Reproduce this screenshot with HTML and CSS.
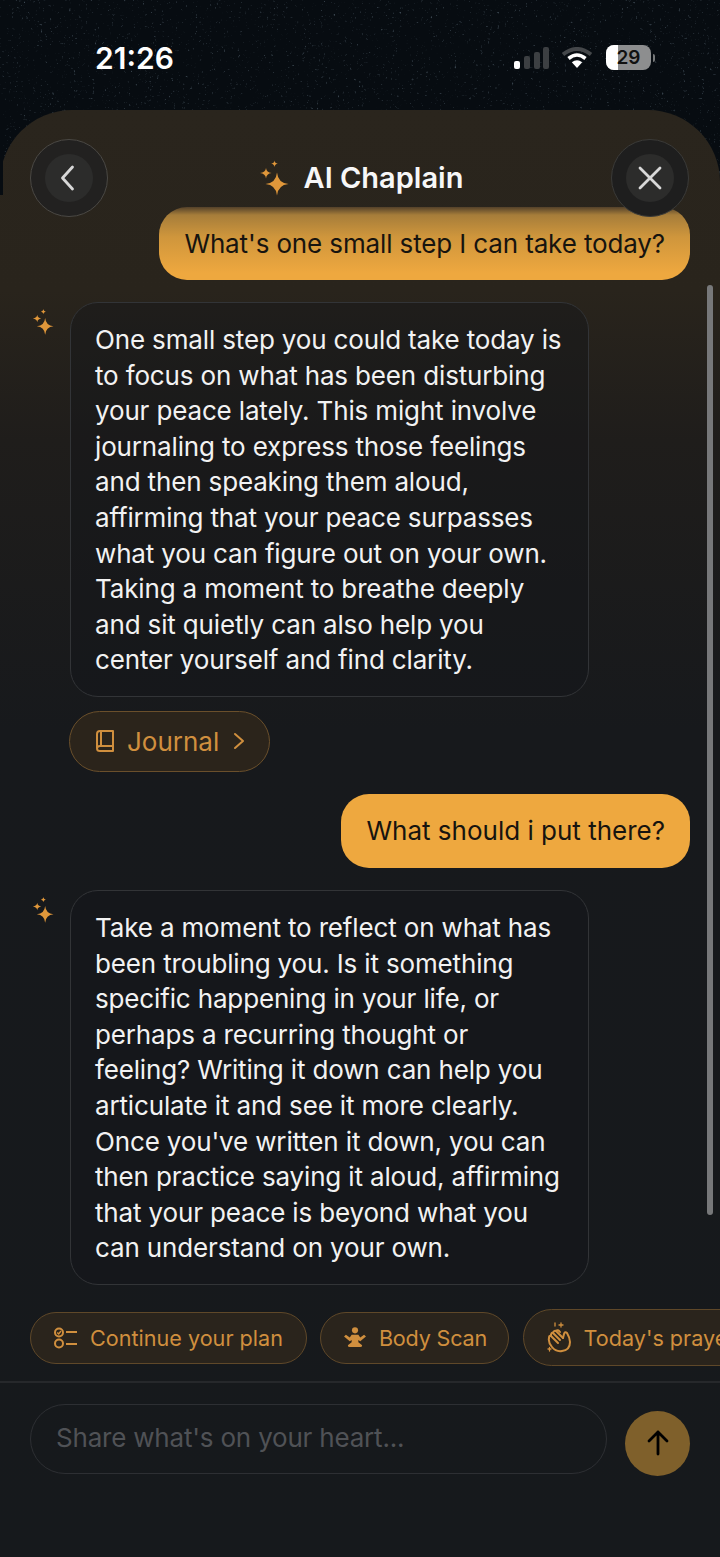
FILE: index.html
```html
<!DOCTYPE html>
<html lang="en">

<head>
    <meta charset="UTF-8">
    <title>AI Chaplain</title>
    <link rel="stylesheet" href="styles.css">
</head>

<body>
    <svg class="defs" width="0" height="0">
        <symbol id="sparkles" viewBox="0 0 30 36">
            <path d="M18 12.500 Q19 23 29.500 24 Q19 25 18 35.500 Q17 25 6.500 24 Q17 23 18 12.500Z" />
            <path d="M7 8 Q7.500 12.500 12.500 13 Q7.500 13.500 7 18.500 Q6.500 13.500 1 13 Q6.500 12.500 7 8Z" />
            <path d="M15.500 0.500 Q15.800 3.300 18.800 3.700 Q15.800 4 15.500 7 Q15.200 4 12.200 3.700 Q15.200 3.300 15.500 0.500Z" />
        </symbol>
        <filter id="star-noise" x="0" y="0" width="100%" height="100%">
            <feTurbulence type="fractalNoise" baseFrequency="0.42" numOctaves="2" seed="7" />
            <feColorMatrix type="matrix" values="0 0 0 0 0.4  0 0 0 0 0.55  0 0 0 0 0.68  2.6 2.6 0 0 -3.2" />
        </filter>
    </svg>

    <svg class="stars" width="720" height="200">
        <rect width="720" height="200" filter="url(#star-noise)" />
    </svg>

    <div class="status-bar">
        <span class="time">21:26</span>
        <div class="status-icons">
            <svg class="signal" width="35" height="22" viewBox="0 0 35 22">
                <rect x="0" y="14" width="6" height="8" rx="2" fill="#fff" />
                <rect x="10" y="9" width="6" height="13" rx="2" fill="#3c3f42" />
                <rect x="20" y="5" width="6" height="17" rx="2" fill="#3c3f42" />
                <rect x="29" y="0" width="6" height="22" rx="2" fill="#3c3f42" />
            </svg>
            <svg class="wifi" width="30" height="22" viewBox="0 0 30 22">
                <path d="M1 7.500 Q15 -3.500 29 7.500" fill="none" stroke="#44474a" stroke-width="4" />
                <path d="M6.500 11.500 Q15 4.500 23.500 11.500" fill="none" stroke="#fff" stroke-width="3.600" />
                <path d="M15 21 L9.800 15.300 Q15 11.300 20.200 15.300Z" fill="#fff" />
            </svg>
            <div class="battery">
                <span class="battery-level"></span>
                <span class="battery-num">29</span>
            </div>
            <span class="battery-nub"></span>
        </div>
    </div>

    <div class="sheet">
        <div class="sheet-header">
            <button class="round-btn">
                <span class="round-inner">
                    <svg width="20" height="28" viewBox="0 0 20 28" fill="none" stroke="#d8d8d8" stroke-width="2.800" stroke-linecap="round" stroke-linejoin="round">
                        <path d="M13.500 3 L3.500 14 L13.500 25" />
                    </svg>
                </span>
            </button>
            <div class="title">
                <svg class="icon-amber" width="30" height="36"><use href="#sparkles" /></svg>
                <span>AI Chaplain</span>
            </div>
            <button class="round-btn round-btn-close">
                <span class="round-inner">
                    <svg width="28" height="28" viewBox="0 0 28 28" fill="none" stroke="#d8d8d8" stroke-width="2.800" stroke-linecap="round">
                        <path d="M4 4 L24 24 M24 4 L4 24" />
                    </svg>
                </span>
            </button>
        </div>

        <div class="chat">
            <div class="msg-user msg-user-first">What's one small step I can take today?</div>

            <div class="msg-ai">
                <svg class="icon-amber msg-spark" width="22" height="26"><use href="#sparkles" /></svg>
                <div class="msg-ai-text">One small step you could take today is to focus on what has been disturbing your peace lately. This might involve journaling to express those feelings and then speaking them aloud, affirming that your peace surpasses what you can figure out on your own. Taking a moment to breathe deeply and sit quietly can also help you center yourself and find clarity.</div>
            </div>

            <button class="journal-btn">
                <svg width="22" height="24" viewBox="0 0 22 24" fill="none" stroke="#d08f3e" stroke-width="2" stroke-linejoin="round">
                    <path d="M3 19 V5 Q3 2 6 2 H19 V22 H6 Q3 22 3 19.500 Q3 17 6 17 H19" />
                    <path d="M7 2 V17" />
                </svg>
                <span>Journal</span>
                <svg width="14" height="20" viewBox="0 0 14 20" fill="none" stroke="#d08f3e" stroke-width="2" stroke-linecap="round" stroke-linejoin="round">
                    <path d="M3 3 L11 10 L3 17" />
                </svg>
            </button>

            <div class="msg-user">What should i put there?</div>

            <div class="msg-ai">
                <svg class="icon-amber msg-spark" width="22" height="26"><use href="#sparkles" /></svg>
                <div class="msg-ai-text">Take a moment to reflect on what has been troubling you. Is it something specific happening in your life, or perhaps a recurring thought or feeling? Writing it down can help you articulate it and see it more clearly. Once you've written it down, you can then practice saying it aloud, affirming that your peace is beyond what you can understand on your own.</div>
            </div>
        </div>

        <div class="chips">
            <button class="chip">
                <svg width="23" height="22" viewBox="0 0 23 22" fill="none" stroke="#d08f3e" stroke-width="2">
                    <circle cx="5" cy="5.500" r="4" />
                    <path d="M3.200 5.500 L4.700 7 L7 4" stroke-width="1.400" />
                    <circle cx="5" cy="16.500" r="4" />
                    <path d="M12 5 H23 M12 17 H23" />
                </svg>
                <span>Continue your plan</span>
            </button>
            <button class="chip chip-tight">
                <svg width="22" height="21" viewBox="0 0 23 22" fill="#d08f3e">
                    <circle cx="11.500" cy="3.500" r="3.200" />
                    <path d="M8 8 H15 L17 11 L21 8 L23 10 L17 15 L15 13.500 V16 L19 19 Q19 21 17 21 H6 Q4 21 4 19 L8 16 V13.500 L6 15 L0 10 L2 8 L6 11Z" />
                </svg>
                <span>Body Scan</span>
            </button>
            <button class="chip chip-tall">
                <svg width="24" height="32" viewBox="0 0 24 32" fill="none" stroke="#d08f3e" stroke-width="2" stroke-linecap="round" stroke-linejoin="round">
                    <path d="M4 14 L11 21 M6 11 L13 18 M9 9 L16 16" />
                    <path d="M2 16 Q1 20 5 25 Q9 30 15 29 Q23 28 23 20 Q23 16 20 11 Q18 9 17 12 L16 16" />
                    <path d="M4 14 Q2 13 2 16 M6 11 Q4 10 4 14 M9 9 Q7 8 6 11 M9 9 Q11 7 13 10" />
                    <path d="M8 1 V4 M14 1 V5 M12 3 H16 M1 27 H4 M2.500 25.500 V29" stroke-width="1.300" />
                </svg>
                <span>Today's prayer</span>
            </button>
        </div>

        <div class="composer">
            <div class="composer-input">Share what's on your heart...</div>
            <button class="send-btn">
                <svg width="24" height="28" viewBox="0 0 24 28" fill="none" stroke="#000" stroke-width="2.800" stroke-linecap="round" stroke-linejoin="round">
                    <path d="M12 25 V3 M3 12 L12 3 L21 12" />
                </svg>
            </button>
        </div>

        <div class="scrollbar"></div>
    </div>
</body>

</html>
```

FILE: styles.css
```css
* {
    box-sizing: border-box;
}

body {
    margin: 0;
    height: 1557px;
    overflow: hidden;
    font-family: Inter, "Noto Sans", sans-serif;
    background-color: #070c11;
}

button {
    font-family: inherit;
    padding: 0;
    cursor: pointer;
}

.defs {
    position: absolute;
}

/* Speckled backdrop behind the status bar */
.stars {
    position: absolute;
    left: 0;
    top: 0;
    opacity: 0.32;
}

.icon-amber {
    fill: #e0973a;
    flex-shrink: 0;
}

/* Status bar */
.status-bar {
    position: relative;
    height: 110px;
    padding: 0 65px 0 95px;
    display: flex;
    justify-content: space-between;
    align-items: flex-start;
}

.time {
    margin-top: 41px;
    color: #fff;
    font-size: 30px;
    line-height: 35px;
    font-weight: 600;
}

.status-icons {
    margin-top: 45px;
    display: flex;
    align-items: center;
    height: 25px;
}

.wifi {
    margin-left: 13px;
}

.battery {
    margin-left: 14px;
    width: 45px;
    height: 25px;
    border-radius: 8px;
    background: #8d8e8f;
    overflow: hidden;
    position: relative;
    display: flex;
    align-items: center;
    justify-content: center;
}

.battery-level {
    position: absolute;
    left: 0;
    top: 0;
    bottom: 0;
    width: 12px;
    background: #fff;
}

.battery-num {
    position: relative;
    color: #111;
    font-size: 19px;
    font-weight: 600;
}

.battery-nub {
    width: 2px;
    height: 8px;
    margin-left: 2px;
    border-radius: 0 2px 2px 0;
    background: #77797a;
}

/* Sheet */
.sheet {
    position: relative;
    height: 1447px;
    border-radius: 72px 72px 0 0;
    background: linear-gradient(#2a251d 0, #29241c 180px, #1f1d1b 330px, #17191c 620px, #16191c 100%);
    display: flex;
    flex-direction: column;
}

/* the notch of backdrop left of the sheet's upper edge */
.sheet::before {
    content: "";
    position: absolute;
    left: 0;
    top: 0;
    width: 3px;
    height: 85px;
    background: #070c11;
}

.sheet-header {
    position: relative;
    z-index: 2;
    height: 97px;
    padding: 29px 31px 0 30px;
    display: flex;
    justify-content: space-between;
    align-items: flex-start;
}

.round-btn {
    width: 78px;
    height: 78px;
    border-radius: 50%;
    border: 1.500px solid #4a4844;
    background: #222120;
    display: flex;
    align-items: center;
    justify-content: center;
}

.round-btn-close {
    background: #1e1e1e;
    border-color: #3a3a38;
}

.round-inner {
    width: 48px;
    height: 48px;
    border-radius: 50%;
    background: #2c2c2b;
    display: flex;
    align-items: center;
    justify-content: center;
}

.title {
    margin: 21px 0 0 3px;
    display: flex;
    align-items: center;
    gap: 15px;
    color: #f7f7f7;
    font-size: 29px;
    line-height: 36px;
    font-weight: 600;
}

/* Messages */
.chat {
    padding: 0 30px;
    display: flex;
    flex-direction: column;
    align-items: flex-start;
}

.msg-user {
    align-self: flex-end;
    margin-top: 22px;
    padding: 19px 25px;
    border-radius: 28px;
    background: #eea83f;
    color: #17140f;
    font-size: 26px;
    line-height: 36px;
}

.msg-user-first {
    position: relative;
    z-index: 1;
    margin-top: 0;
    padding: 18.500px 25px;
    background: linear-gradient(#54412a 0, #a67d3a 8px, #cf963c 30px, #eea83f 66px);
    letter-spacing: -0.13px;
}

.msg-ai {
    margin-top: 22px;
    display: flex;
    gap: 17px;
    align-items: flex-start;
}

.msg-spark {
    margin: 7px -1px 0 2px;
}

.msg-ai-text {
    width: 519px;
    padding: 19px 22px 18px 24px;
    border: 1.500px solid #323437;
    border-radius: 28px;
    background: rgba(20, 22, 26, 0.45);
    color: #f2f2f2;
    font-size: 26px;
    line-height: 35.600px;
    letter-spacing: -0.15px;
}

.journal-btn {
    margin: 14px 0 0 39px;
    height: 61px;
    width: 201px;
    padding: 0 0 0 24px;
    display: flex;
    align-items: center;
    gap: 11px;
    border: 1.500px solid #6a4f2b;
    border-radius: 31px;
    background: #2b241b;
    color: #d08f3e;
    font-size: 26px;
}

.journal-btn svg:last-child {
    margin-left: 2px;
}

/* Quick actions */
.chips {
    margin-top: 24px;
    height: 58px;
    padding-left: 30px;
    display: flex;
    align-items: center;
    gap: 13.500px;
    overflow: hidden;
    white-space: nowrap;
}

.chip {
    flex-shrink: 0;
    height: 52px;
    padding: 0 23px 0 23px;
    display: flex;
    align-items: center;
    gap: 13px;
    border: 1.500px solid #5f4829;
    border-radius: 26px;
    background: #2a241c;
    color: #d08f3e;
    font-size: 21.600px;
}

.chip-tight {
    padding: 0 21px 0 22.500px;
    letter-spacing: -0.2px;
}

.chip-tall {
    height: 57px;
    border-radius: 29px;
}

.composer {
    margin-top: 14px;
    padding: 21px 30px 0;
    border-top: 2px solid #26282b;
    display: flex;
    align-items: flex-start;
    gap: 18px;
}

.composer-input {
    flex: 1;
    height: 70px;
    padding: 0 25px 2px;
    display: flex;
    align-items: center;
    border: 1.500px solid #2d2f33;
    border-radius: 35px;
    color: #505256;
    font-size: 26px;
    letter-spacing: -0.2px;
}

.send-btn {
    margin-top: 7px;
    width: 65px;
    height: 65px;
    border: 0;
    border-radius: 50%;
    background: #7f602b;
    display: flex;
    align-items: center;
    justify-content: center;
}

.scrollbar {
    position: absolute;
    left: 707px;
    top: 175px;
    width: 6px;
    height: 930px;
    border-radius: 3px;
    background: #77787a;
}
```
